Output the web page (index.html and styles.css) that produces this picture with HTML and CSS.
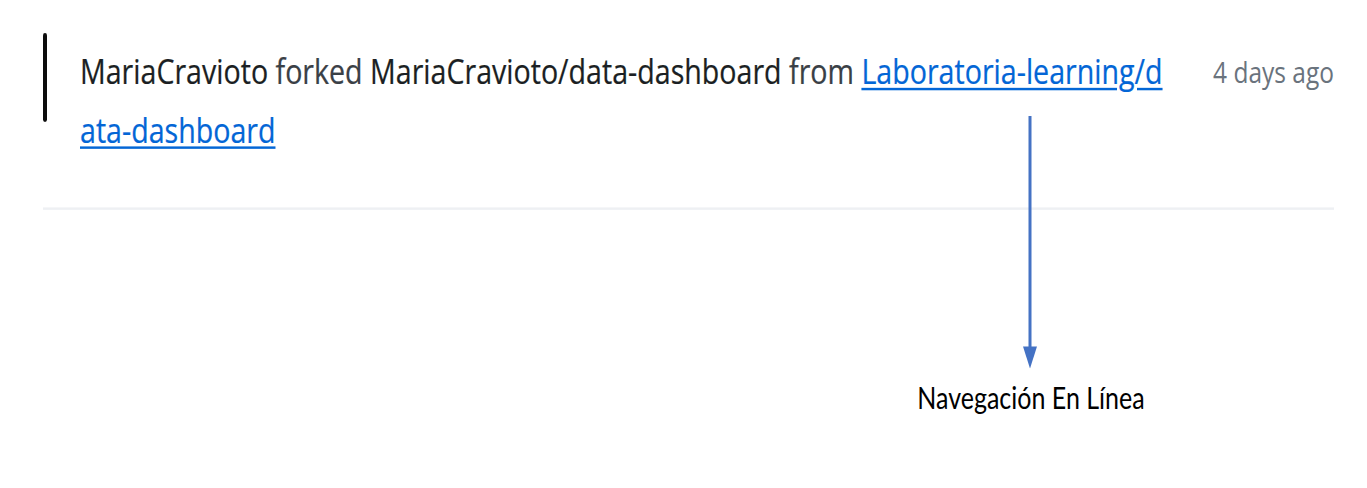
FILE: index.html
```html
<!DOCTYPE html>
<html lang="es">
<head>
<meta charset="utf-8">
<title>Feed</title>
<link rel="stylesheet" href="styles.css">
</head>
<body>
<div class="stage">
  <div class="feed-item">
    <div class="bar"></div>
    <div class="text">
      <a class="actor" href="#">MariaCravioto</a> forked <a class="repo" href="#">MariaCravioto/data-dashboard</a> from <a class="source" href="#">Laboratoria-learning/d<wbr>ata-dashboard</a>
    </div>
    <div class="time">4 days ago</div>
  </div>
  <svg class="arrow" width="20" height="207" viewBox="0 0 20 207">
    <rect x="8.5" y="0" width="3" height="192" fill="#4472c4"/>
    <polygon points="3,189 17,189 10,207" fill="#4472c4"/>
  </svg>
  <div class="label">Navegación En Línea</div>
</div>
</body>
</html>
```

FILE: styles.css
```css
html, body {
  margin: 0;
  padding: 0;
  background: #ffffff;
}
body {
  width: 1367px;
  height: 488px;
  overflow: hidden;
}
.stage {
  position: relative;
  width: 1367px;
  height: 400px;
  transform: scaleY(1.22);
  transform-origin: 0 0;
  font-family: "Open Sans", "Noto Sans", sans-serif;
}
.feed-item {
  margin-left: 43px;
  width: 1291px;
  display: flex;
  align-items: flex-start;
  padding-top: 27px;
  padding-bottom: 41px;
  border-bottom: 2px solid #eef0f3;
}
.bar {
  flex: none;
  width: 3.5px;
  height: 73px;
  background: #0d0d0d;
  border-radius: 2px;
}
.text {
  flex: none;
  width: 1095px;
  margin-left: 33.5px;
  margin-top: 7px;
  font-size: 28.6px;
  line-height: 47.5px;
  color: #3a4046;
  -webkit-text-stroke: 0.2px currentColor;
}
.text a {
  text-decoration: none;
}
.actor, .repo {
  color: #1b1f23;
}
.source {
  color: #0366d6;
  text-decoration: underline !important;
  text-decoration-thickness: 2px;
  text-underline-offset: 3px;
}
.time {
  margin-left: auto;
  margin-top: 8px;
  font-size: 24.5px;
  line-height: 47.5px;
  color: #6a737d;
  white-space: nowrap;
}
.arrow {
  position: absolute;
  left: 1020px;
  top: 95px;
}
.label {
  position: absolute;
  left: 1031px;
  top: 307px;
  transform: translateX(-50%);
  font-family: "Lato", sans-serif;
  font-size: 25px;
  line-height: 36px;
  color: #000000;
  white-space: nowrap;
}
```
